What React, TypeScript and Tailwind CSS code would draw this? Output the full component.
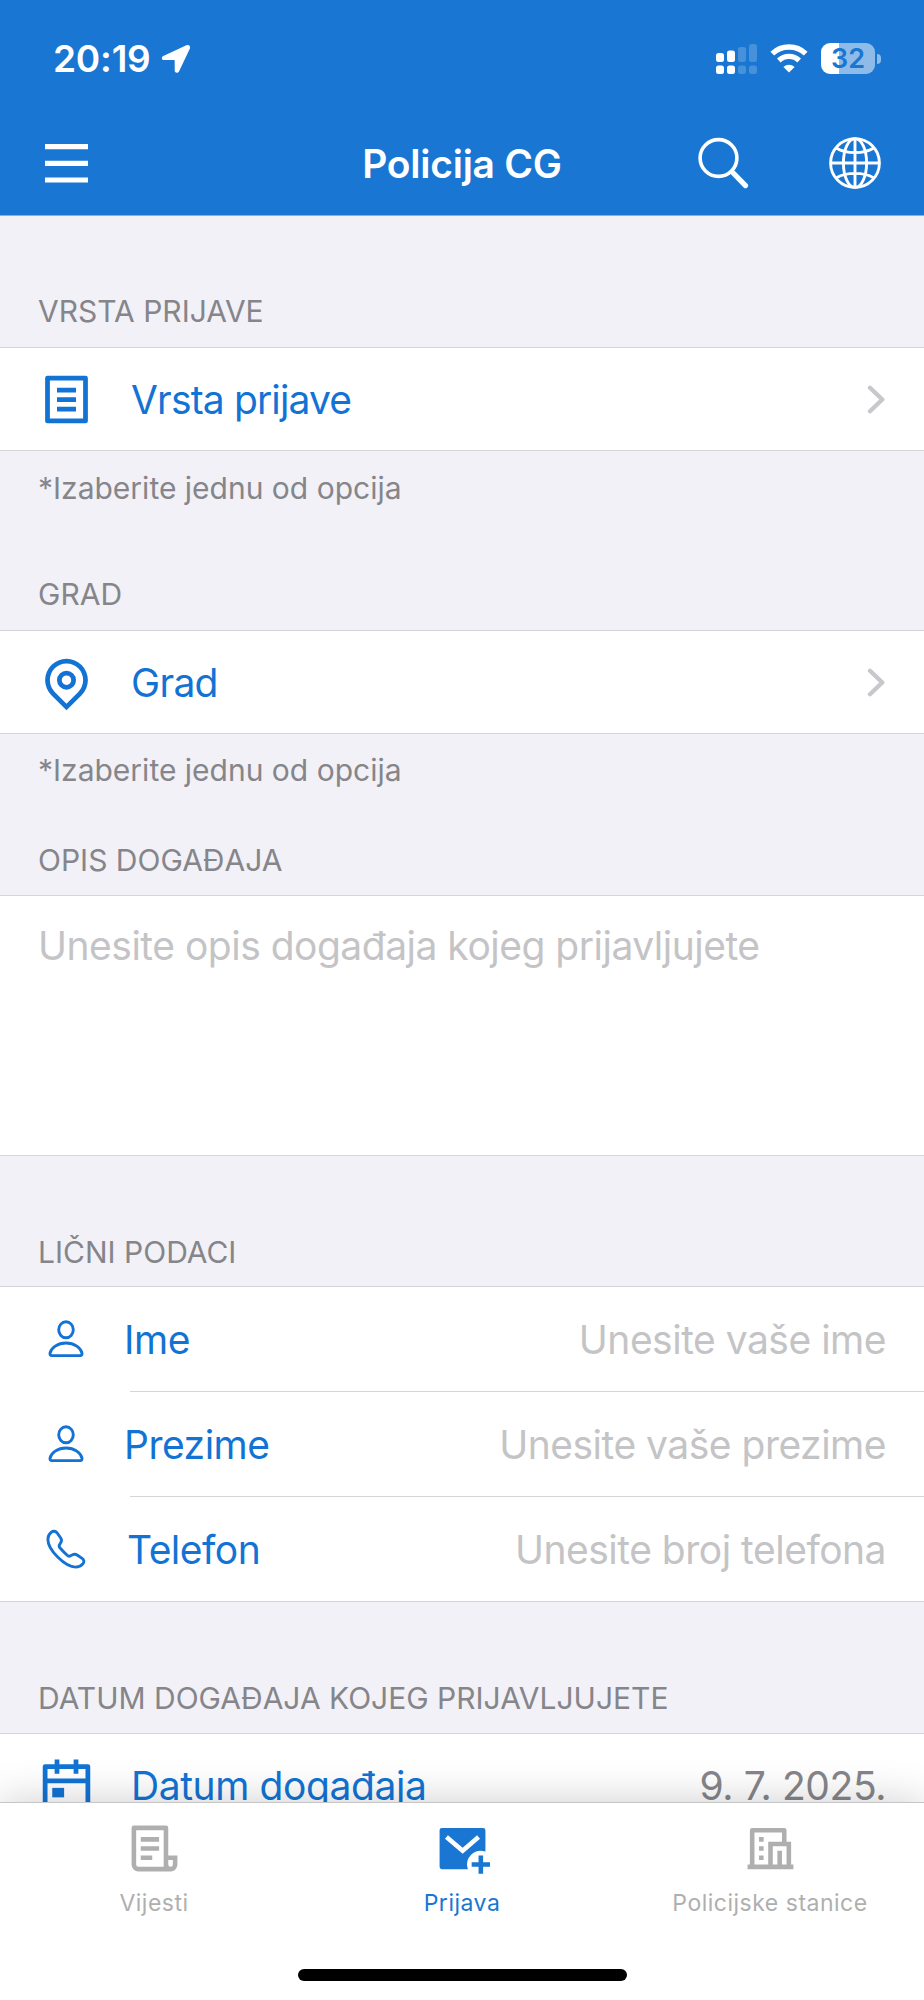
import { ReactNode } from 'react';

const tabs = [
  { id: 'news', label: 'Vijesti' },
  { id: 'report', label: 'Prijava' },
  { id: 'stations', label: 'Policijske stanice' },
];

const personalFields = [
  { id: 'name', label: 'Ime', placeholder: 'Unesite vaše ime', offset: '-ml-[6px]' },
  { id: 'surname', label: 'Prezime', placeholder: 'Unesite vaše prezime', offset: '-ml-[6px]' },
  { id: 'phone', label: 'Telefon', placeholder: 'Unesite broj telefona', offset: '-ml-[3px]' },
];

function StatusBar() {
  return (
    <div className="flex h-[117px] items-center justify-between pl-[53px] pr-[43px]">
      <div className="flex items-center gap-[10px]">
        <span className="text-[37px] font-semibold leading-none tracking-[-0.2px]">20:19</span>
        <svg className="h-[30px] w-[30px]" viewBox="0 0 30 30" fill="currentColor">
          <path d="M25.4 1.2 2.3 11.9C.1 13 .6 16.1 3 16.1h10.1c.4 0 .6.2.6.6v9.9c0 2.5 3.2 3 4.3.8L28.9 4.5c1-2.2-1.1-4.4-3.5-3.3Z" />
        </svg>
      </div>
      <div className="flex items-center">
        <svg className="mr-[12px] h-[32px] w-[42px]" viewBox="0 0 42 32" fill="currentColor">
          <rect x="0" y="10" width="8" height="9" rx="2.5" />
          <rect x="11" y="7.5" width="8" height="11.5" rx="2.5" />
          <rect x="22" y="4" width="8" height="15" rx="2.5" opacity=".2" />
          <rect x="33" y="1" width="8" height="18" rx="2.5" opacity=".2" />
          <rect x="0" y="22.5" width="8" height="8.5" rx="2.5" />
          <rect x="11" y="22.5" width="8" height="8.5" rx="2.5" />
          <rect x="22" y="22.5" width="8" height="8.5" rx="2.5" opacity=".2" />
          <rect x="33" y="22.5" width="8" height="8.5" rx="2.5" opacity=".2" />
        </svg>
        <svg className="mr-[13px] h-[29px] w-[38px]" viewBox="0 0 38 29" fill="none">
          <path d="M2.3 9.6a24.3 24.3 0 0 1 33.4 0" stroke="currentColor" strokeWidth="5.4" />
          <path d="M8.8 16.5a14.8 14.8 0 0 1 20.4 0" stroke="currentColor" strokeWidth="5.2" />
          <path d="M19 28.6 13.4 22.9a8.3 8.3 0 0 1 11.2 0Z" fill="currentColor" />
        </svg>
        <div className="flex h-[31px] w-[54px] items-center justify-center rounded-[9px] bg-[linear-gradient(90deg,#fff_18px,#8fbbe9_18px)] text-[27px] font-semibold leading-none text-[#1976d2]">
          32
        </div>
        <div className="ml-[2px] h-[10px] w-[4px] rounded-r-full bg-[#8fbbe9]" />
      </div>
    </div>
  );
}

function NavBar() {
  return (
    <div className="grid h-[92px] grid-cols-[1fr_auto_1fr] items-center px-[43px]">
      <svg className="ml-[2px] h-[39px] w-[43px]" viewBox="0 0 43 39" fill="currentColor">
        <path d="M0 0h43v5.2H0zM0 16.7h43v5.2H0zM0 33.4h43v5.2H0z" />
      </svg>
      <h1 className="text-[39px] font-semibold leading-none tracking-[-0.25px]">Policija CG</h1>
      <div className="flex items-center justify-end gap-[80px]">
        <svg className="h-[52px] w-[52px]" viewBox="0 0 52 52" fill="none" stroke="currentColor" strokeLinecap="round">
          <circle cx="21.5" cy="21" r="18.4" strokeWidth="3.6" />
          <path d="m35 34.8 13.5 13.8" strokeWidth="5.2" />
        </svg>
        <svg className="h-[52px] w-[52px]" viewBox="0 0 52 52" fill="none" stroke="currentColor" strokeWidth="2.9">
          <circle cx="26" cy="26" r="24.4" />
          <ellipse cx="26" cy="26" rx="11.6" ry="24.4" />
          <path d="M26 1.6v48.8M1.6 26h48.8M7.6 11.3c9.5 5.8 27.3 5.8 36.8 0M7.6 40.7c9.5-5.8 27.3-5.8 36.8 0" />
        </svg>
      </div>
    </div>
  );
}

function SectionTitle({ children }: { children: ReactNode }) {
  return <h2 className="text-[30px] leading-[36px] text-[#85858a]">{children}</h2>;
}

function Chevron() {
  return (
    <svg className="mr-px h-[29px] w-[18px]" viewBox="0 0 18 29" fill="none" stroke="#c7c7cc" strokeWidth="4.3" strokeLinecap="round" strokeLinejoin="round">
      <path d="m3 2.7 12.3 11.8L3 26.3" />
    </svg>
  );
}

function ListIcon() {
  return (
    <svg className="h-[57px] w-[57px]" viewBox="0 0 24 24" fill="none" stroke="currentColor" strokeWidth="2" strokeLinejoin="round">
      <rect x="4" y="3" width="16" height="18" />
      <path d="M8 8h8M8 12h8M8 16h8" />
    </svg>
  );
}

function PinIcon() {
  return (
    <svg className="h-[57px] w-[57px]" viewBox="0 0 24 24" fill="currentColor">
      <path d="m12 20.9 4.95-4.95a7 7 0 1 0-9.9 0L12 20.9Zm0 2.828-6.364-6.364a9 9 0 1 1 12.728 0L12 23.728ZM12 13a2 2 0 1 0 0-4 2 2 0 0 0 0 4Zm0 2a4 4 0 1 1 0-8 4 4 0 0 1 0 8Z" />
    </svg>
  );
}

function CalendarIcon() {
  return (
    <svg className="h-[57px] w-[57px]" viewBox="0 0 24 24" fill="none" stroke="currentColor" strokeWidth="2" strokeLinejoin="round">
      <path d="M3 4h18v17H3zM3 10h18M8 1v6M16 1v6" />
      <path d="M6 13h5v4H6z" fill="currentColor" stroke="none" />
    </svg>
  );
}

function PersonIcon() {
  return (
    <svg className="h-[40px] w-[40px]" viewBox="0 0 40 40" fill="none" stroke="currentColor" strokeWidth="2.9">
      <ellipse cx="20" cy="9.8" rx="7.3" ry="8" />
      <path d="M20 23C11.5 23 5 28 4 33.3c-.2 1.5.5 2.3 1.8 2.3h28.4c1.300 0 2-.8 1.800-2.300C35 28 28.500 23 20 23Z" />
    </svg>
  );
}

function PhoneIcon() {
  return (
    <svg className="h-[40px] w-[40px]" viewBox="0 0 40 40" fill="none" stroke="currentColor" strokeWidth="2.9" strokeLinejoin="round">
      <path d="M5.1 3.3C3 5 1.9 7.3 1.9 10.6c0 4.4 3.4 11.3 10 17.7 6.3 6.2 13.2 9.8 17.600 9.800 3.300 0 5.600-1.100 7.300-3.200 1.700-2 1.300-4.100-.7-5.500l-4.600-3.200c-2-1.300-3.300-1.300-4.900-.4l-2.100 1c-1.300.7-2.200.5-3.300-.5-2.700-2.400-5.100-4.900-7.300-7.500-1-1.200-1-2.200-.2-3.400l1-1.600c1.100-1.600 1.200-3 0-4.800L11.400 4.200C9.800 1.800 7.200 1.600 5.100 3.300Z" />
    </svg>
  );
}

function TabIcon({ id }: { id: string }) {
  if (id === 'news') {
    return (
      <svg className="h-[55px] w-[55px]" viewBox="0 0 24 24" fill="currentColor">
        <path d="M19 22H5a3 3 0 0 1-3-3V3a1 1 0 0 1 1-1h14a1 1 0 0 1 1 1v12h4v4a3 3 0 0 1-3 3Zm-1-5v2a1 1 0 1 0 2 0v-2h-2Zm-2 3V4H4v15a1 1 0 0 0 1 1h11ZM6 7h8v2H6V7Zm0 4h8v2H6v-2Zm0 4h5v2H6v-2Z" />
      </svg>
    );
  }
  if (id === 'report') {
    return (
      <svg className="h-[55px] w-[55px]" viewBox="0 0 24 24" fill="currentColor">
        <path d="M22 13.34A6 6 0 0 0 14.34 21H3a1 1 0 0 1-1-1V4a1 1 0 0 1 1-1h18a1 1 0 0 1 1 1v9.34ZM12.06 11.68 5.65 6.24 4.35 7.76l7.72 6.56 7.58-6.56-1.3-1.52-6.29 5.44ZM19 18v-3h2v3h3v2h-3v3h-2v-3h-3v-2h3Z" />
      </svg>
    );
  }
  return (
    <svg className="h-[55px] w-[55px]" viewBox="0 0 24 24" fill="currentColor">
      <path d="M21 19h1v2H2v-2h1V4a1 1 0 0 1 1-1h14a1 1 0 0 1 1 1v5h2v10ZM5 5v14h6V9h6V5H5Zm8 6v8h2v-6h2v6h2v-8h-6ZM7 7h2v2H7V7Zm0 4h2v2H7v-2Zm0 4h2v2H7v-2Z" />
    </svg>
  );
}

function Row({ icon, label, tracking, children }: { icon: ReactNode; label: string; tracking: string; children: ReactNode }) {
  return (
    <div className="flex h-[104px] items-center border-y border-[#d6d6da] bg-white px-[38px] text-[39px] text-[#1273d4]">
      {icon}
      <span className={`ml-[36px] flex-1 leading-none ${tracking}`}>{label}</span>
      {children}
    </div>
  );
}

export default function App() {
  return (
    <div className="flex h-[2000px] w-[924px] flex-col overflow-hidden bg-[#f2f1f7] font-[Inter,sans-serif]">
      <header className="h-[216px] shrink-0 border-b border-[#a3a9b8] bg-[#1976d2] text-white">
        <StatusBar />
        <NavBar />
      </header>

      <main className="h-[1586px] shrink-0 overflow-hidden">
        <div className="flex h-[131px] items-end px-[38px] pb-[18px]">
          <SectionTitle>VRSTA PRIJAVE</SectionTitle>
        </div>
        <Row icon={<ListIcon />} label="Vrsta prijave" tracking="tracking-[-0.85px]"><Chevron /></Row>

        <div className="flex h-[179px] flex-col justify-between px-[38px] pb-[18px] pt-[19px]">
          <p className="text-[30px] leading-[36px] text-[#85858a]">*Izaberite jednu od opcija</p>
          <SectionTitle>GRAD</SectionTitle>
        </div>
        <Row icon={<PinIcon />} label="Grad" tracking="tracking-[-0.7px]"><Chevron /></Row>

        <div className="flex h-[161px] flex-col justify-between px-[38px] pb-[17px] pt-[18px]">
          <p className="text-[30px] leading-[36px] text-[#85858a]">*Izaberite jednu od opcija</p>
          <SectionTitle>OPIS DOGAĐAJA</SectionTitle>
        </div>
        <div className="h-[261px] border-y border-[#d6d6da] bg-white px-[38px] pt-[26px] text-[39px] leading-[48px] tracking-[-0.5px] text-[#c4c4c6]">
          Unesite opis događaja kojeg prijavljujete
        </div>

        <div className="flex h-[130px] items-end px-[38px] pb-[16px]">
          <SectionTitle>LIČNI PODACI</SectionTitle>
        </div>
        <div className="border-y border-[#d6d6da] bg-white pl-[46px] text-[39px] leading-none">
          {personalFields.map((f, i) => (
            <div key={f.id} className="flex items-center">
              <div className="text-[#1273d4]">
                {f.id === 'phone' ? <PhoneIcon /> : <PersonIcon />}
              </div>
              <div className="ml-[44px] flex-1">
                <div className={`flex items-center justify-between pr-[38px] ${
                  i !== personalFields.length - 1 ? 'h-[105px] border-b border-[#d6d6da]' : 'h-[104px]'
                }`}>
                  <span className={`tracking-[-0.5px] text-[#1273d4] ${f.offset}`}>{f.label}</span>
                  <span className="tracking-[-0.5px] text-[#c4c4c6]">{f.placeholder}</span>
                </div>
              </div>
            </div>
          ))}
        </div>

        <div className="flex h-[131px] items-end px-[38px] pb-[17px]">
          <SectionTitle>DATUM DOGAĐAJA KOJEG PRIJAVLJUJETE</SectionTitle>
        </div>
        <Row icon={<CalendarIcon />} label="Datum događaja" tracking="tracking-[-0.4px]">
          <span className="leading-none tracking-[-0.4px] text-[#85858a]">9. 7. 2025.</span>
        </Row>
      </main>

      <nav className="relative flex h-[198px] flex-col border-t border-[#c6c6c8] bg-white shadow-[0_0_40px_rgba(0,0,0,0.2)]">
        <div className="grid grid-cols-3 pt-[18px]">
          {tabs.map(t => (
            <div
              key={t.id}
              className={`flex flex-col items-center ${t.id === 'report' ? 'text-[#1976d2]' : 'text-[#afafaf]'}`}
            >
              <TabIcon id={t.id} />
              <span className="mt-[13px] text-[23px] leading-[28px] tracking-[0.5px]">{t.label}</span>
            </div>
          ))}
        </div>
        <div className="mx-auto mt-[52px] h-[12px] w-[329px] rounded-full bg-black" />
      </nav>
    </div>
  );
}
